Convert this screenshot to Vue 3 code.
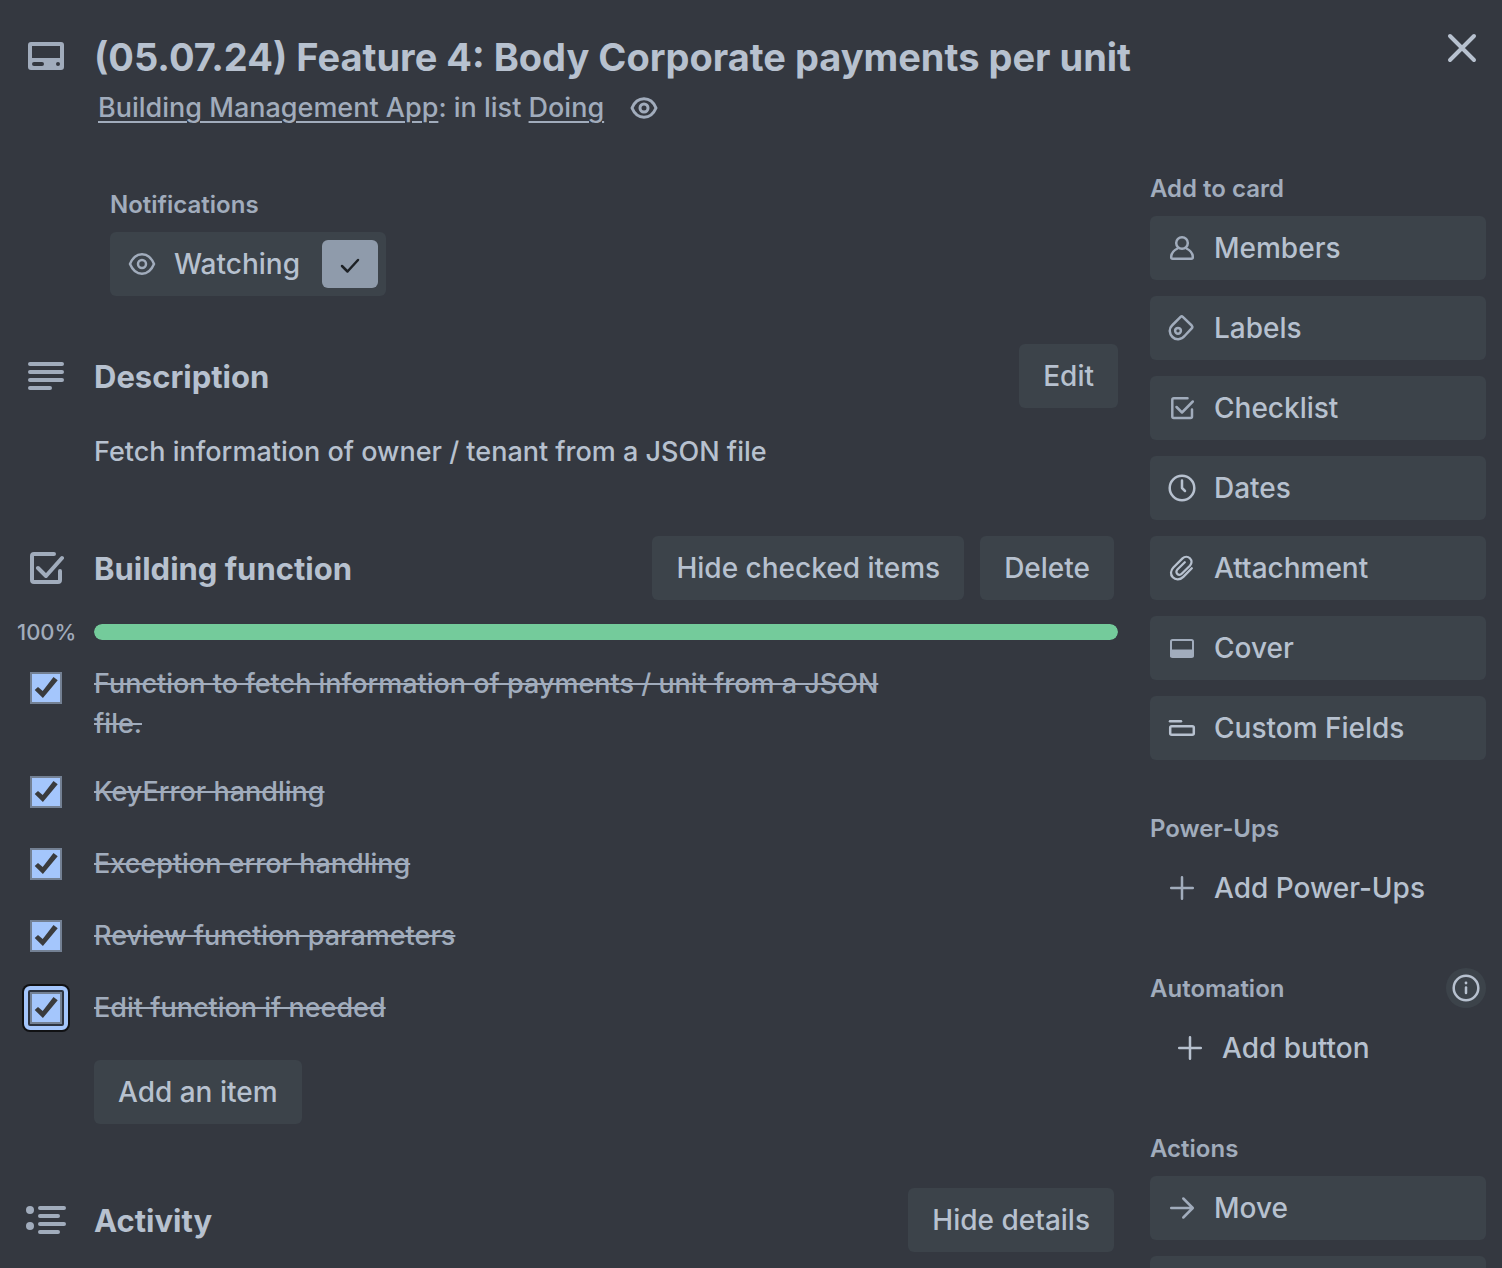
<script setup>
import { ref } from 'vue'

const items = ref([
  { id: 'i1', text: 'Function to fetch information of payments / unit from a JSON file.', done: true },
  { id: 'i2', text: 'KeyError handling', done: true },
  { id: 'i3', text: 'Exception error handling', done: true },
  { id: 'i4', text: 'Review function parameters', done: true },
  { id: 'i5', text: 'Edit function if needed', done: true, active: true },
])

const addActions = ['Members', 'Labels', 'Checklist', 'Dates', 'Attachment', 'Cover', 'Custom Fields']
</script>

<template>
  <div class="card">
    <header class="header">
      <svg class="icon section-icon" viewBox="0 0 36 36" fill="none">
        <path fill-rule="evenodd" fill="currentColor" d="M3 4h30a3 3 0 0 1 3 3v22a3 3 0 0 1-3 3H3a3 3 0 0 1-3-3V7a3 3 0 0 1 3-3ZM4 8v12h28V8ZM6 24a2 2 0 0 0 0 4h8a2 2 0 0 0 0-4ZM30 24a2 2 0 1 0 0 4 2 2 0 0 0 0-4Z" />
      </svg>
      <div class="heading">
        <h1>(05.07.24) Feature 4: Body Corporate payments per unit</h1>
        <p class="location">
          <span><a href="#board">Building Management App</a>: in list <a href="#list">Doing</a></span>
          <svg class="icon eye" viewBox="0 0 32 32" fill="none" stroke="currentColor" stroke-width="3">
            <path d="M4 16C6.500 10 11 6.800 16 6.800S25.500 10 28 16C25.500 22 21 25.200 16 25.200S6.500 22 4 16Z" stroke-linejoin="round" />
            <circle cx="16" cy="16" r="4" />
          </svg>
        </p>
      </div>
      <button class="close" type="button" aria-label="Close">
        <svg viewBox="0 0 32 32" fill="none" stroke="currentColor" stroke-width="4" stroke-linecap="round"><path d="M4 4l24 24M28 4L4 28" /></svg>
      </button>
    </header>

    <div class="body">
      <main class="main">
        <section class="notifications">
          <h3>Notifications</h3>
          <button class="btn watch" type="button">
            <svg class="icon" viewBox="0 0 32 32" fill="none" stroke="currentColor" stroke-width="2.500">
              <path d="M4 16C6.500 10 11 6.300 16 6.300S25.500 10 28 16C25.500 22 21 25.700 16 25.700S6.500 22 4 16Z" stroke-linejoin="round" />
              <circle cx="16" cy="16" r="4" />
            </svg>
            <span>Watching</span>
            <span class="tick">
              <svg viewBox="0 0 32 32" fill="none" stroke="currentColor" stroke-width="2.500" stroke-linecap="round" stroke-linejoin="round"><path d="M8 18l5.500 5.500L24 12" /></svg>
            </span>
          </button>
        </section>

        <section class="description">
          <div class="section-head">
            <svg class="icon section-icon" viewBox="0 0 36 36" stroke="currentColor" stroke-width="4" stroke-linecap="round"><path d="M2 6h32M2 14h32M2 22h32M2 30h20" /></svg>
            <h2>Description</h2>
            <button class="btn" type="button">Edit</button>
          </div>
          <p>Fetch information of owner / tenant from a JSON file</p>
        </section>

        <section class="checklist">
          <div class="section-head inset">
            <svg class="icon section-icon" viewBox="0 0 36 36" fill="none" stroke="currentColor" stroke-width="4" stroke-linecap="round" stroke-linejoin="round">
              <path d="M26 4H6a2 2 0 0 0-2 2v24a2 2 0 0 0 2 2h24a2 2 0 0 0 2-2v-9" />
              <path d="M10 18l8 8L34 8" />
            </svg>
            <h2>Building function</h2>
            <button class="btn" type="button">Hide checked items</button>
            <button class="btn" type="button">Delete</button>
          </div>
          <div class="progress">
            <span id="percent" class="percent">100%</span>
            <div class="track" role="progressbar" aria-labelledby="percent" aria-valuenow="100" aria-valuemin="0" aria-valuemax="100">
              <div class="fill" :style="{ width: '100%' }"></div>
            </div>
          </div>
          <ul class="items">
            <li v-for="item in items" :key="item.id" class="item">
              <span class="box" :class="{ active: item.active }">
                <input :id="item.id" v-model="item.done" type="checkbox">
                <svg v-if="item.done" viewBox="0 0 32 32"><path fill="#3a3b3d" d="M4.700 18L8 15L12.700 19L23.500 5L27.700 8.300L12.900 26Z" /></svg>
              </span>
              <label :for="item.id" :class="{ done: item.done }">{{ item.text }}</label>
            </li>
          </ul>
          <button class="btn add-item" type="button">Add an item</button>
        </section>

        <section class="activity">
          <div class="section-head inset">
            <svg class="icon section-icon wide" viewBox="0 0 40 36" fill="none" stroke="currentColor" stroke-width="4" stroke-linecap="round">
              <path d="M14 6h24M14 14h18M14 22h24M14 30h18" />
              <circle cx="4" cy="8" r="4" fill="currentColor" stroke="none" />
              <circle cx="4" cy="24" r="4" fill="currentColor" stroke="none" />
            </svg>
            <h2>Activity</h2>
            <button class="btn" type="button">Hide details</button>
          </div>
        </section>
      </main>

      <aside class="sidebar">
        <section>
          <h3>Add to card</h3>
          <div class="stack">
            <button v-for="name in addActions" :key="name" class="btn side" type="button">
              <svg class="icon" :class="{ bright: ['Dates', 'Attachment', 'Custom Fields'].includes(name) }" viewBox="0 0 32 32" fill="none" stroke="currentColor" stroke-width="2.500" stroke-linecap="round" stroke-linejoin="round">
                <template v-if="name === 'Members'">
                  <circle cx="16" cy="11" r="5.800" />
                  <path d="M11.500 16.500C7.500 18.500 5.200 22 5.200 25.300Q5.200 26.800 6.700 26.800H25.300Q26.800 26.800 26.800 25.300C26.800 22 24.500 18.500 20.500 16.500" />
                </template>
                <template v-else-if="name === 'Labels'">
                  <path d="M14.600 4.900Q15.700 3.900 16.800 4.900L25.700 13.500Q27 15 25.700 16.400L19 23.500C15 28.500 9.500 28 6.500 25C3 21.500 2.800 16.500 6 13.500Z" />
                  <circle cx="12" cy="18.800" r="2.900" />
                </template>
                <template v-else-if="name === 'Checklist'">
                  <path d="M21.500 6.300H7.800a1.500 1.500 0 0 0-1.500 1.500v16.800a1.500 1.500 0 0 0 1.500 1.500h16.700a1.500 1.500 0 0 0 1.500-1.500v-7" />
                  <path d="M10.500 15l5.500 5.500L26.800 9.500" />
                </template>
                <template v-else-if="name === 'Dates'">
                  <circle cx="16" cy="16" r="12.300" />
                  <path d="M16 8.500V16L19 19" />
                </template>
                <path v-else-if="name === 'Attachment'" stroke-width="2.300" d="M25.800 16.300L17.300 24.900C14 28.200 9.500 28.200 6.800 25.300C4.200 22.500 4.500 18.500 7.400 15.500L16.500 6.400C18.700 4.300 21.900 4.300 23.900 6.300C26 8.400 26 11.500 23.900 13.700L15.700 21.800C14.400 23.100 12.500 23.100 11.300 21.900C10.100 20.700 10.100 18.800 11.400 17.500L18.800 10.200" />
                <template v-else-if="name === 'Cover'">
                  <rect x="5" y="8" width="22" height="17" rx="1.500" stroke-width="2" />
                  <path d="M5 18h22v6.500H5Z" fill="currentColor" stroke-width="1" />
                </template>
                <template v-else>
                  <path d="M4 9.300h11" />
                  <rect x="4.200" y="14.200" width="23.600" height="8.600" rx="1.500" />
                </template>
              </svg>
              <span>{{ name }}</span>
            </button>
          </div>
        </section>

        <section>
          <h3>Power-Ups</h3>
          <button class="btn side plain" type="button">
            <svg class="icon" viewBox="0 0 32 32" stroke="currentColor" stroke-width="2.500" stroke-linecap="round"><path d="M16 5.200v21.600M5.200 16h21.600" /></svg>
            <span>Add Power-Ups</span>
          </button>
        </section>

        <section>
          <div class="side-head">
            <h3>Automation</h3>
            <button class="info" type="button" aria-label="About automation">
              <svg viewBox="0 0 40 40" fill="none" stroke="currentColor" stroke-linecap="round">
                <circle cx="20" cy="20" r="12.300" stroke-width="2.500" />
                <path d="M20 19.500v5.500" stroke-width="2.500" />
                <circle cx="20" cy="15" r="1.400" fill="currentColor" stroke="none" />
              </svg>
            </button>
          </div>
          <button class="btn side plain indent" type="button">
            <svg class="icon bright" viewBox="0 0 32 32" stroke="currentColor" stroke-width="2.500" stroke-linecap="round"><path d="M16 5.200v21.600M5.200 16h21.600" /></svg>
            <span>Add button</span>
          </button>
        </section>

        <section>
          <h3>Actions</h3>
          <div class="stack">
            <button class="btn side" type="button">
              <svg class="icon" viewBox="0 0 32 32" fill="none" stroke="currentColor" stroke-width="2.500" stroke-linecap="round" stroke-linejoin="round"><path d="M5.200 16h21.200M17.300 6.500L26.800 16L17.300 25.500" /></svg>
              <span>Move</span>
            </button>
            <button class="btn side" type="button" aria-label="Copy">
              <svg class="icon" viewBox="0 0 32 32" fill="none" stroke="currentColor" stroke-width="2.500" stroke-linejoin="round"><path d="M12 12h14v14H12ZM12 20H6V6h14v6" /></svg>
            </button>
          </div>
        </section>
      </aside>
    </div>
  </div>
</template>

<style>
html,
body {
  margin: 0;
  background: #343840;
}
</style>

<style scoped>
.card,
.card * {
  box-sizing: border-box;
}

.card {
  --text: #b7c1cf;
  --subtle: #a1acbc;
  --surface: #3c434a;
  height: 100vh;
  overflow: hidden;
  background: #343840;
  color: var(--text);
  font-family: Inter, "Liberation Sans", sans-serif;
  font-size: 27px;
  font-weight: 450;
  line-height: 40px;
}

h1,
h2,
h3,
p,
ul {
  margin: 0;
  padding: 0;
}

button {
  margin: 0;
  border: 0;
  font: inherit;
  color: inherit;
  cursor: pointer;
}

svg {
  display: block;
  flex: none;
}

.icon {
  width: 32px;
  height: 32px;
  color: var(--subtle);
}

.icon.bright {
  color: var(--text);
}

.header {
  display: flex;
  align-items: flex-start;
  height: 168px;
  padding: 28px 20px 0 28px;
}

.section-icon {
  width: 36px;
  height: 36px;
}

.header .section-icon {
  margin-top: 10px;
}

.heading {
  flex: 1;
  padding-left: 30px;
}

h1 {
  font-size: 38px;
  line-height: 58px;
  font-weight: 650;
  white-space: nowrap;
}

.location {
  display: flex;
  align-items: center;
  gap: 24px;
  height: 44px;
  padding-left: 4px;
  color: var(--subtle);
}

.location a {
  color: inherit;
  text-decoration: underline;
  text-decoration-thickness: 2px;
  text-underline-offset: 4px;
}

.close {
  padding: 4px;
  background: none;
}

.close svg {
  width: 32px;
  height: 32px;
}

.body {
  display: flex;
  gap: 32px;
  padding-right: 16px;
}

.main {
  flex: 1;
  min-width: 0;
  padding-top: 16px;
}

.sidebar {
  flex: none;
  width: 336px;
  display: flex;
  flex-direction: column;
  gap: 48px;
}

h2 {
  flex: 1;
  padding-top: 2px;
  font-size: 31px;
  font-weight: 700;
}

h3 {
  margin-bottom: 6px;
  font-size: 24px;
  line-height: 42px;
  font-weight: 600;
  color: var(--subtle);
}

.btn {
  display: flex;
  align-items: center;
  height: 64px;
  padding: 0 24px;
  border-radius: 6px;
  background: var(--surface);
  font-size: 28px;
  font-weight: 500;
  white-space: nowrap;
}

.notifications {
  padding-left: 110px;
}

.watch {
  gap: 16px;
  padding: 8px 8px 8px 16px;
}

.tick {
  display: grid;
  place-items: center;
  width: 56px;
  height: 48px;
  margin-left: 6px;
  border-radius: 6px;
  background: #8f9bab;
  color: #1d2125;
}

.tick svg {
  width: 32px;
  height: 32px;
}

.description,
.checklist {
  padding-bottom: 64px;
}

.notifications {
  padding-bottom: 48px;
}

.section-head {
  display: flex;
  align-items: center;
  gap: 16px;
  padding-left: 28px;
}

.section-head h2 {
  padding-left: 14px;
}

.section-head.inset {
  padding-right: 4px;
}

.section-icon.wide {
  width: 40px;
  margin: 0 -2px;
}

.description p {
  padding: 24px 0 0 94px;
}

.progress {
  display: flex;
  align-items: center;
  height: 16px;
  margin: 24px 0 12px;
}

.percent {
  flex: none;
  width: 94px;
  padding-left: 17px;
  font-size: 22px;
  color: var(--subtle);
}

.track {
  flex: 1;
  height: 16px;
  overflow: hidden;
  border-radius: 8px;
  background: var(--surface);
}

.fill {
  height: 100%;
  border-radius: 8px;
  background: #74cb9b;
}

.items {
  list-style: none;
}

.item {
  display: flex;
  align-items: center;
  min-height: 72px;
  padding: 12px 216px 12px 30px;
}

.box {
  position: relative;
  display: grid;
  align-self: flex-start;
  flex: none;
  width: 32px;
  height: 32px;
  margin: 8px 32px 0 0;
}

.box input,
.box svg {
  grid-area: 1 / 1;
  width: 32px;
  height: 32px;
  margin: 0;
}

.box input {
  appearance: none;
  border: 2px solid #738093;
  background: #a4c6fc;
}

.box svg {
  z-index: 1;
  pointer-events: none;
}

.box.active::before {
  content: "";
  position: absolute;
  inset: -6px;
  border: 4px solid #a4c6fc;
  border-radius: 6px;
  background: #2c3340;
  box-shadow: 0 0 0 2px #101113;
}

.box.active input {
  z-index: 1;
}

.item label {
  color: var(--subtle);
}

.item label.done {
  text-decoration: line-through;
  text-decoration-thickness: 2px;
}

.add-item {
  margin: 16px 0 0 94px;
}

.stack {
  display: flex;
  flex-direction: column;
  gap: 16px;
}

.side {
  width: 100%;
  gap: 16px;
  padding: 0 16px;
}

.plain {
  background: none;
}

.indent {
  padding-left: 24px;
}

.side-head {
  display: flex;
  align-items: center;
  justify-content: space-between;
  height: 40px;
  margin-bottom: 8px;
}

.side-head h3 {
  margin: 0;
  padding-top: 2px;
}

.info {
  padding: 0;
  border-radius: 50%;
  background: var(--surface);
}

.info svg {
  width: 40px;
  height: 40px;
}
</style>
